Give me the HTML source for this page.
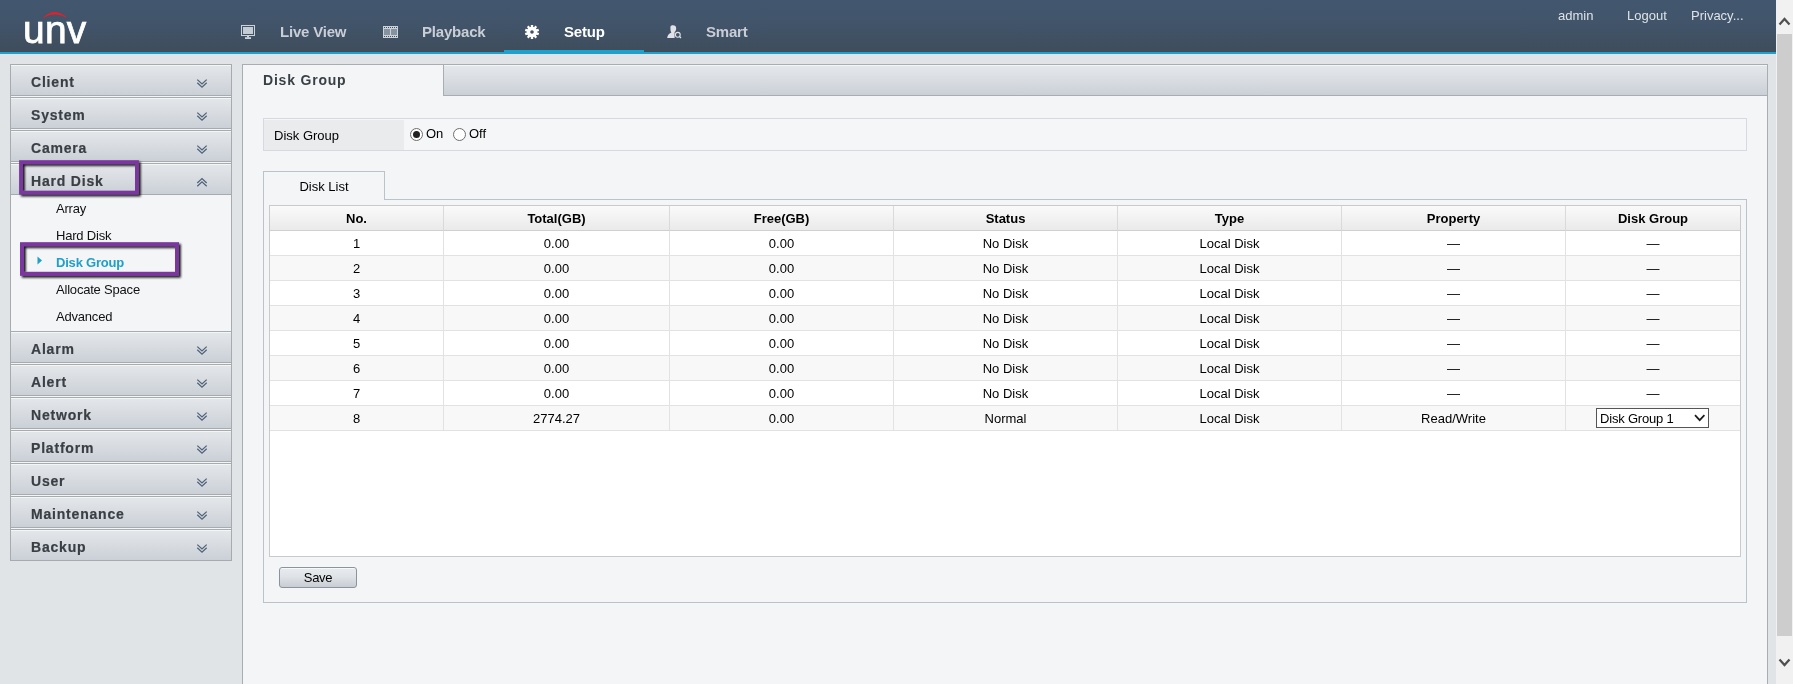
<!DOCTYPE html>
<html>
<head>
<meta charset="utf-8">
<title>Disk Group</title>
<style>
*{box-sizing:border-box;margin:0;padding:0}
html,body{width:1793px;height:684px;overflow:hidden}
body{position:relative;background:#e0e4e7;font-family:"Liberation Sans",sans-serif;font-size:13px;color:#000}
.abs{position:absolute}
#wrap{position:absolute;left:0;top:0;width:1793px;height:684px;overflow:hidden;will-change:transform}
#hdr{position:absolute;left:0;top:0;width:1776px;height:52px;background:linear-gradient(#42576f 0,#41546a 45%,#3f4d5c 100%)}
#hline{position:absolute;left:0;top:52px;width:1776px;height:2px;background:#1fa1cc}
#actline{position:absolute;left:504px;top:50px;width:140px;height:4px;background:#1fa1cc}
.nav{position:absolute;top:23px;height:18px;line-height:18px;font-size:15px;font-weight:bold;color:#c9ced6;white-space:nowrap;letter-spacing:-0.2px}
.nav.on{color:#fff}
.top{position:absolute;top:8px;height:16px;line-height:16px;font-size:13px;color:#dfe3e8;white-space:nowrap}
#logo{position:absolute;left:22.9px;top:7.9px;width:110px;height:44px;color:#fff;font-size:38.5px;line-height:44px;white-space:nowrap;letter-spacing:0.25px;-webkit-text-stroke:0.75px #fff;transform:scaleX(1.012);transform-origin:0 0}
/* scrollbar */
#sb{position:absolute;left:1776px;top:0;width:17px;height:684px;background:#f1f1f1}
#sbt{position:absolute;left:1px;top:34px;width:15px;height:602px;background:#cdcdcd}
/* sidebar */
#side{position:absolute;left:10px;top:64px;width:222px;height:497px;border-left:1px solid #a8abae;border-right:1px solid #a8abae;background:#f3f5f7}
.mi{position:absolute;left:-1px;width:222px;height:32px;background:linear-gradient(#f3f5f6 0,#f3f5f6 1px,#e3e6e9 1px,#d8dce1 50%,#cad0d7 100%);border:1px solid #a8abae;font-size:14px;font-weight:bold;color:#3a3f45;letter-spacing:0.8px;line-height:34px;padding-left:20px;white-space:nowrap;-webkit-text-stroke:0.2px #3a3f45}
.mi svg{position:absolute;left:185px;top:13px}
.si{position:absolute;left:45px;height:18px;line-height:18px;font-size:13px;color:#111;white-space:nowrap;letter-spacing:-0.2px;margin-top:1px}
.si.on{color:#1f9fc9;font-weight:bold}
/* main */
#main{position:absolute;left:242px;top:64px;width:1526px;height:640px;border:1px solid #a9acb0;background:#f3f5f7}
#tabbar{position:absolute;left:200px;top:0;width:1324px;height:31px;background:linear-gradient(#f3f5f6 0,#f3f5f6 1px,#e4e7ea 1px,#d9dde2 50%,#cad0d7 100%);border-left:1px solid #a9acb0;border-bottom:1px solid #a9acb0}
#title{position:absolute;left:20px;top:5px;font-size:14px;font-weight:bold;color:#3a3f45;letter-spacing:0.8px;line-height:20px;white-space:nowrap}
#frow{position:absolute;left:20px;top:53px;width:1484px;height:33px;border:1px solid #d6dae0;background:#f4f6f8}
#flab{position:absolute;left:0;top:1px;width:140px;height:30px;background:#e9ebed;line-height:31px;padding-left:10px;font-size:13px}
.rad{position:absolute;top:9px;width:13px;height:13px;border:1px solid #6e6e6e;border-radius:50%;background:#fff}
.rad.on:after{content:"";position:absolute;left:2px;top:2px;width:7px;height:7px;border-radius:50%;background:#222}
.rl{position:absolute;top:6px;line-height:18px;font-size:13px}
#panel{position:absolute;left:20px;top:134px;width:1484px;height:404px;border:1px solid #bcc2c9;background:#f3f5f7}
#dtab{position:absolute;left:20px;top:106px;width:122px;height:29px;border:1px solid #bcc2c9;border-bottom:none;background:#f3f5f7;text-align:center;line-height:29px;font-size:13px}
#tblwrap{position:absolute;left:5px;top:5px;width:1472px;height:352px;background:#fff;border:1px solid #c9cacc}
table{border-collapse:separate;border-spacing:0;width:1470px;table-layout:fixed;font-size:13px}
th{height:25px;background:linear-gradient(#fafafa,#eaeaea);border-right:1px solid #dadada;border-bottom:1px solid #d0d0d0;font-weight:bold;text-align:center;padding:0}
td{height:25px;border-right:1px solid #e2e2e2;border-bottom:1px solid #e2e2e2;text-align:center;padding:0}
tbody tr:nth-child(even) td{background:#f8f8f8}
tr td:last-child,tr th:last-child{border-right:none}
#save{position:absolute;left:15px;top:367px;width:78px;height:21px;border:1px solid #8b939c;border-radius:3px;background:linear-gradient(#fff 0,#e7eaed 1.5px,#dfe3e7 45%,#c8cdd4 100%);text-align:center;line-height:19px;font-size:13px;letter-spacing:-0.3px}
#sel{display:block;position:relative;width:113px;height:20px;margin:0 0 0 30px;border:1px solid #555;background:#fff;text-align:left;line-height:20px;padding-left:3px;font-size:13px;letter-spacing:-0.2px}
</style>
</head>
<body>
<div id="wrap">
<div id="hdr"></div>
<div id="hline"></div>
<div id="actline"></div>
<div id="logo">unv</div>
<svg class="abs" style="left:40px;top:8px" width="32" height="14" viewBox="40 8 32 14"><path d="M42 18.7 Q54.5 5.3 67.8 18.5 Q54.5 10.3 42 18.7Z" fill="#ee1c25"/></svg>

<svg class="abs" style="left:241px;top:25px" width="15" height="15" viewBox="0 0 15 15"><rect x="0.5" y="0.5" width="13" height="10" fill="none" stroke="#cdd2d9"/><rect x="2" y="2" width="10" height="7" fill="#c5cbd3"/><rect x="6" y="11" width="2" height="1.4" fill="#cdd2d9"/><rect x="4" y="12.2" width="6" height="1.8" fill="#cdd2d9"/></svg>
<svg class="abs" style="left:383px;top:26px" width="15" height="12" viewBox="0 0 15 12"><rect width="15" height="12" fill="#cdd2d9"/><rect x="1" y="3" width="6" height="6" fill="#8593a1"/><rect x="8" y="3" width="6" height="6" fill="#8593a1"/><g fill="#3f5166"><rect x="1" y="1" width="1" height="1"/><rect x="1" y="10" width="1" height="1"/><rect x="3" y="1" width="1" height="1"/><rect x="3" y="10" width="1" height="1"/><rect x="5" y="1" width="1" height="1"/><rect x="5" y="10" width="1" height="1"/><rect x="7" y="1" width="1" height="1"/><rect x="7" y="10" width="1" height="1"/><rect x="9" y="1" width="1" height="1"/><rect x="9" y="10" width="1" height="1"/><rect x="11" y="1" width="1" height="1"/><rect x="11" y="10" width="1" height="1"/><rect x="13" y="1" width="1" height="1"/><rect x="13" y="10" width="1" height="1"/></g></svg>
<svg class="abs" style="left:524px;top:24px" width="16" height="16" viewBox="0 0 16 16"><path d="M6.90 2.82 L6.78 0.90 L9.22 0.90 L9.10 2.82 L10.15 3.16 L11.19 1.54 L13.16 2.98 L11.94 4.46 L12.59 5.35 L14.37 4.65 L15.13 6.97 L13.27 7.45 L13.27 8.55 L15.13 9.03 L14.37 11.35 L12.59 10.65 L11.94 11.54 L13.16 13.02 L11.19 14.46 L10.15 12.84 L9.10 13.18 L9.22 15.10 L6.78 15.10 L6.90 13.18 L5.85 12.84 L4.81 14.46 L2.84 13.02 L4.06 11.54 L3.41 10.65 L1.63 11.35 L0.87 9.03 L2.73 8.55 L2.73 7.45 L0.87 6.97 L1.63 4.65 L3.41 5.35 L4.06 4.46 L2.84 2.98 L4.81 1.54 L5.85 3.16Z M8 6.2 A1.8 1.8 0 1 0 8 9.8 A1.8 1.8 0 1 0 8 6.2Z" fill="#fff" fill-rule="evenodd"/></svg>
<svg class="abs" style="left:667px;top:25px" width="15" height="14" viewBox="0 0 15 14"><path d="M3.4 2.2 C3.4 0.8 4.6 0.2 6 0.2 C8 0.2 9.2 1.2 9.2 3.2 C9.2 5 8.6 6.4 7.6 7 L7.6 13 L0.2 13 C0.4 10.4 1.6 9 4.4 7.6 C3.6 6.6 3.4 4.6 3.4 2.2Z" fill="#dfe3e8"/><circle cx="10.8" cy="9.8" r="2.4" fill="none" stroke="#dfe3e8" stroke-width="1.1"/><path d="M12.5 11.5 L14 13" stroke="#dfe3e8" stroke-width="1.2"/></svg>
<div class="nav" style="left:280px">Live View</div>
<div class="nav" style="left:422px">Playback</div>
<div class="nav on" style="left:564px">Setup</div>
<div class="nav" style="left:706px">Smart</div>

<div class="top" style="left:1558px">admin</div>
<div class="top" style="left:1627px">Logout</div>
<div class="top" style="left:1691px">Privacy...</div>

<div id="side">
<div class="mi" style="top:0px">Client<svg width="12" height="11" viewBox="0 0 12 11"><path d="M1.3 1.6 L6 6 L10.7 1.6 M1.3 4.8 L6 9.2 L10.7 4.8" fill="none" stroke="#506279" stroke-width="1.25"/></svg></div>
<div class="mi" style="top:33px">System<svg width="12" height="11" viewBox="0 0 12 11"><path d="M1.3 1.6 L6 6 L10.7 1.6 M1.3 4.8 L6 9.2 L10.7 4.8" fill="none" stroke="#506279" stroke-width="1.25"/></svg></div>
<div class="mi" style="top:66px">Camera<svg width="12" height="11" viewBox="0 0 12 11"><path d="M1.3 1.6 L6 6 L10.7 1.6 M1.3 4.8 L6 9.2 L10.7 4.8" fill="none" stroke="#506279" stroke-width="1.25"/></svg></div>
<div class="mi" style="top:99px">Hard Disk<svg width="12" height="11" viewBox="0 0 12 11"><path d="M1.3 6 L6 1.6 L10.7 6 M1.3 9.2 L6 4.8 L10.7 9.2" fill="none" stroke="#506279" stroke-width="1.25"/></svg></div>
<div class="mi" style="top:267px">Alarm<svg width="12" height="11" viewBox="0 0 12 11"><path d="M1.3 1.6 L6 6 L10.7 1.6 M1.3 4.8 L6 9.2 L10.7 4.8" fill="none" stroke="#506279" stroke-width="1.25"/></svg></div>
<div class="mi" style="top:300px">Alert<svg width="12" height="11" viewBox="0 0 12 11"><path d="M1.3 1.6 L6 6 L10.7 1.6 M1.3 4.8 L6 9.2 L10.7 4.8" fill="none" stroke="#506279" stroke-width="1.25"/></svg></div>
<div class="mi" style="top:333px">Network<svg width="12" height="11" viewBox="0 0 12 11"><path d="M1.3 1.6 L6 6 L10.7 1.6 M1.3 4.8 L6 9.2 L10.7 4.8" fill="none" stroke="#506279" stroke-width="1.25"/></svg></div>
<div class="mi" style="top:366px">Platform<svg width="12" height="11" viewBox="0 0 12 11"><path d="M1.3 1.6 L6 6 L10.7 1.6 M1.3 4.8 L6 9.2 L10.7 4.8" fill="none" stroke="#506279" stroke-width="1.25"/></svg></div>
<div class="mi" style="top:399px">User<svg width="12" height="11" viewBox="0 0 12 11"><path d="M1.3 1.6 L6 6 L10.7 1.6 M1.3 4.8 L6 9.2 L10.7 4.8" fill="none" stroke="#506279" stroke-width="1.25"/></svg></div>
<div class="mi" style="top:432px">Maintenance<svg width="12" height="11" viewBox="0 0 12 11"><path d="M1.3 1.6 L6 6 L10.7 1.6 M1.3 4.8 L6 9.2 L10.7 4.8" fill="none" stroke="#506279" stroke-width="1.25"/></svg></div>
<div class="mi" style="top:465px">Backup<svg width="12" height="11" viewBox="0 0 12 11"><path d="M1.3 1.6 L6 6 L10.7 1.6 M1.3 4.8 L6 9.2 L10.7 4.8" fill="none" stroke="#506279" stroke-width="1.25"/></svg></div>
<div class="si" style="top:135px">Array</div>
<div class="si" style="top:162px">Hard Disk</div>
<div class="si on" style="top:189px">Disk Group</div>
<div class="si" style="top:216px">Allocate Space</div>
<div class="si" style="top:243px">Advanced</div>
<svg class="abs" style="left:26px;top:192px" width="6" height="9" viewBox="0 0 6 9"><path d="M0.5 0.5 L5 4.5 L0.5 8.5Z" fill="#1f9fc9"/></svg>
</div>
<svg class="abs" style="left:0;top:150px" width="200" height="140" viewBox="0 150 200 140"><defs><filter id="ds" x="-10%" y="-20%" width="130%" height="160%"><feDropShadow dx="1.8" dy="1.8" stdDeviation="1.05" flood-color="#000" flood-opacity="0.92"/></filter></defs><g fill="none" stroke="#7a379e" filter="url(#ds)"><rect x="21.05" y="162.15" width="115.9" height="30.5" stroke-width="3.9"/><rect x="22" y="244.2" width="155" height="29.6" stroke-width="4"/></g></svg>
<div id="main">
  <div id="tabbar"></div>
  <div id="title">Disk Group</div>
  <div id="frow"><div id="flab">Disk Group</div>
    <span class="rad on" style="left:146px"></span><span class="rl" style="left:162px">On</span>
    <span class="rad" style="left:189px"></span><span class="rl" style="left:205px">Off</span>
  </div>
  <div id="panel">
    <div id="tblwrap">
<table><colgroup><col style="width:174px"><col style="width:226px"><col style="width:224px"><col style="width:224px"><col style="width:224px"><col style="width:224px"><col style="width:174px"></colgroup>
<thead><tr><th>No.</th><th>Total(GB)</th><th>Free(GB)</th><th>Status</th><th>Type</th><th>Property</th><th>Disk Group</th></tr></thead>
<tbody>
<tr><td>1</td><td>0.00</td><td>0.00</td><td>No Disk</td><td>Local Disk</td><td>—</td><td>—</td></tr>
<tr><td>2</td><td>0.00</td><td>0.00</td><td>No Disk</td><td>Local Disk</td><td>—</td><td>—</td></tr>
<tr><td>3</td><td>0.00</td><td>0.00</td><td>No Disk</td><td>Local Disk</td><td>—</td><td>—</td></tr>
<tr><td>4</td><td>0.00</td><td>0.00</td><td>No Disk</td><td>Local Disk</td><td>—</td><td>—</td></tr>
<tr><td>5</td><td>0.00</td><td>0.00</td><td>No Disk</td><td>Local Disk</td><td>—</td><td>—</td></tr>
<tr><td>6</td><td>0.00</td><td>0.00</td><td>No Disk</td><td>Local Disk</td><td>—</td><td>—</td></tr>
<tr><td>7</td><td>0.00</td><td>0.00</td><td>No Disk</td><td>Local Disk</td><td>—</td><td>—</td></tr>
<tr><td>8</td><td>2774.27</td><td>0.00</td><td>Normal</td><td>Local Disk</td><td>Read/Write</td><td><span id="sel">Disk Group 1<svg class="abs" style="left:97px;top:5px" width="12" height="9" viewBox="0 0 12 9"><path d="M1 1.2 L5.7 6.2 L10.4 1.2" fill="none" stroke="#1a1a1a" stroke-width="1.7"/></svg></span></td></tr>
</tbody></table>
</div>
    <div id="save">Save</div>
  </div>
  <div id="dtab">Disk List</div>
</div>

<div id="sb"><div id="sbt"></div>
<svg class="abs" style="left:0;top:0" width="17" height="684"><path d="M3.5 24.5 L8.5 19 L13.5 24.5" fill="none" stroke="#505050" stroke-width="2.2"/><path d="M3.5 659.5 L8.5 665 L13.5 659.5" fill="none" stroke="#505050" stroke-width="2.3"/></svg>
</div>
</div>
</body>
</html>
